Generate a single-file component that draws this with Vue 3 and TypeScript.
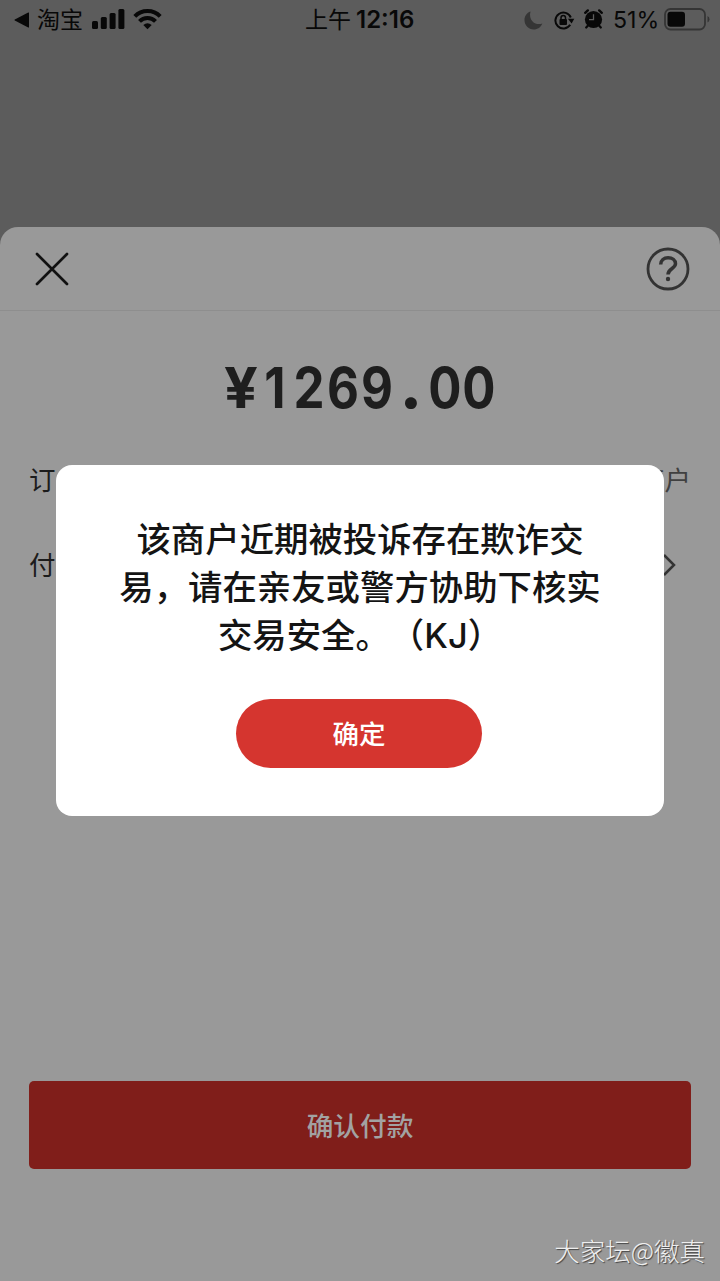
<script setup lang="ts">
const amount: string[] = [...'¥1269.00']
const message: string[] = ['该商户近期被投诉存在欺诈交', '易，请在亲友或警方协助下核实', '交易安全。（KJ）']
const signalBars: number[] = [8, 12, 16, 20]

function digitClass(c: string): string {
  if (c === '.') return 'digit point'
  if (c === '¥') return 'digit yen'
  return 'digit'
}
</script>

<template>
  <div class="screen">
    <header class="status">
      <div class="status-left">
        <svg class="back" width="16" height="16" viewBox="0 0 16 16"><path d="M15 1v14q0 .8-.8.4L.8 8.5q-.8-.5 0-1L14.200.6Q15 .2 15 1z" /></svg>
        <span class="source">淘宝</span>
        <svg class="signal" width="33" height="20" viewBox="0 0 33 20">
          <rect v-for="(h, i) in signalBars" :key="h" :x="i * 8.8" :y="20 - h" width="6" :height="h" rx="1.5" />
        </svg>
        <svg class="wifi" width="29" height="22" viewBox="0 0 29 22">
          <g fill="none" stroke="#080808" stroke-width="4">
            <path d="M1.800 8.300C8.700 1.200 20.300 1.200 27.200 8.300" />
            <path d="M6.500 13.300C10.800 8.800 18.200 8.800 22.500 13.300" />
          </g>
          <path d="M10.300 17Q14.500 13.500 18.700 17L14.500 21.300z" />
        </svg>
      </div>
      <div class="clock"><span class="period">上午</span><span class="time">12:16</span></div>
      <div class="status-right">
        <svg class="moon" width="19" height="19" viewBox="0 0 19 19"><path d="M6.500.5C2.800 1.800.5 5 .5 9c0 5.200 4 9.500 9.200 9.500 4 0 7.300-2.300 8.600-6C14.800 13.800 11 13 8.600 10.500S5.400 4.300 6.500.5z" /></svg>
        <svg class="lock" width="21" height="19" viewBox="0 0 21 19">
          <path d="M16.200 13.800A8 8 0 1 1 16.800 6.500" fill="none" stroke="#080808" stroke-width="2" />
          <path d="M13.900 7.800h6.400l-2.700 4.800z" />
          <rect x="5.500" y="8" width="7.500" height="6" rx="1" />
          <path d="M7 8.500V6.800a2.250 2.250 0 0 1 4.500 0v1.700" fill="none" stroke="#080808" stroke-width="1.500" />
        </svg>
        <svg class="alarm" width="19" height="20" viewBox="0 0 19 20">
          <circle cx="9.500" cy="10.500" r="8.600" />
          <path d="M1.200 3.800L3.800 1.400M17.800 3.800L15.200 1.400" stroke="#080808" stroke-width="2.400" stroke-linecap="round" />
          <path d="M4 16.500l-1.800 2M15 16.500l1.800 2" stroke="#080808" stroke-width="2.200" stroke-linecap="round" />
          <path d="M9.500 5.200v5.500H5" fill="none" stroke="#5c5c5c" stroke-width="1.300" />
        </svg>
        <span class="percent">51%</span>
        <svg class="battery" width="46" height="23" viewBox="0 0 46 23">
          <rect x="1" y="1" width="40" height="20.500" rx="5.500" fill="none" stroke="#353535" stroke-width="1.800" />
          <rect x="3.500" y="3.700" width="17.500" height="15" rx="3" />
          <path d="M43.500 8q2 1 2 3.300t-2 3.300z" fill="#353535" />
        </svg>
      </div>
    </header>

    <main class="sheet">
      <div class="sheet-bar">
        <svg class="close" width="34" height="34" viewBox="0 0 34 34"><path d="M2 2l30 30M32 2L2 32" /></svg>
        <svg class="help" width="44" height="44" viewBox="0 0 44 44">
          <circle cx="22" cy="22" r="20" />
          <path d="M14.700 17.400C14.700 13.200 18 10.700 22.100 10.700S29.500 13.200 29.500 16.800C29.500 21.600 22 21.500 22 27.600" />
          <circle class="dot" cx="22" cy="32" r="2.200" />
        </svg>
      </div>
      <div class="amount">
        <span v-for="(c, i) in amount" :key="i" :class="digitClass(c)">{{ c }}</span>
      </div>
      <div class="row"><span>订</span><span class="value">商户</span></div>
      <div class="row">
        <span>付</span>
        <svg class="chevron" width="14" height="24" viewBox="0 0 14 24"><path d="M2 2l10 10L2 22" /></svg>
      </div>
      <button class="pay">确认付款</button>
    </main>

    <section class="dialog" role="dialog">
      <p class="message"><span v-for="line in message" :key="line">{{ line }}</span></p>
      <button class="confirm">确定</button>
    </section>
    <div class="watermark">大家坛@徽真</div>
  </div>
</template>

<style>
body {
  background: #5c5c5c;
}
</style>

<style scoped>
.screen {
  position: relative;
  width: 720px;
  height: 1281px;
  overflow: hidden;
  display: flex;
  flex-direction: column;
  background: #5c5c5c;
  color: #080808;
  font-family: Inter, "Noto Sans CJK SC", sans-serif;
}
svg {
  display: block;
  flex: none;
  fill: #080808;
}
button {
  display: block;
  border: 0;
  padding: 0 0 2px;
  font-family: "Noto Sans CJK SC", sans-serif;
}
.status {
  height: 227px;
  flex: none;
  display: grid;
  grid-template-columns: 1fr 110px 1fr;
  grid-template-rows: 40px;
  line-height: 40px;
}
.status-left,
.clock,
.status-right {
  display: flex;
  align-items: center;
  white-space: nowrap;
}
.back {
  margin-left: 14px;
}
.source {
  margin-left: 7px;
  padding-bottom: 3px;
  font: 23px/37px "Noto Sans CJK SC", sans-serif;
}
.signal {
  margin-left: 9px;
  margin-top: -2px;
}
.wifi {
  margin-left: 8px;
  margin-top: -2px;
}
.period {
  padding-bottom: 3px;
  font: 23px/37px "Noto Sans CJK SC", sans-serif;
}
.time {
  margin-left: 5px;
  font-size: 24px;
  font-weight: 600;
}
.status-right {
  justify-content: flex-end;
  padding-right: 10px;
}
.moon {
  fill: #353535;
}
.lock {
  margin-left: 11px;
}
.alarm {
  margin-left: 9px;
  margin-top: -2px;
}
.percent {
  margin-left: 10px;
  width: 46px;
  font-size: 23.200px;
}
.battery {
  margin-left: 5px;
  margin-top: -2px;
}
.sheet {
  flex: 1;
  border-radius: 18px 18px 0 0;
  background: #999;
}
.sheet-bar {
  height: 83px;
  display: flex;
  align-items: center;
  justify-content: space-between;
  padding: 0 30px 0 35px;
  border-bottom: 1px solid #8e8e8e;
}
.close {
  fill: none;
  stroke: #111;
  stroke-width: 2.700;
  stroke-linecap: round;
}
.help {
  fill: none;
  stroke: #333;
  stroke-width: 2.800;
}
.help path {
  stroke-width: 3.500;
}
.help .dot {
  fill: #333;
  stroke: none;
}
.amount {
  display: flex;
  justify-content: center;
  height: 126px;
  padding-top: 27px;
  box-sizing: border-box;
  color: #1e1e1e;
  font: 700 56px/100px Inter, sans-serif;
}
.digit {
  display: flex;
  justify-content: center;
  width: 33.900px;
  transform: scaleX(0.880);
}
.yen {
  transform: scaleX(1.060);
}
.point {
  transform: scale(1.250);
  transform-origin: 50% 70%;
}
.row {
  height: 85px;
  display: flex;
  align-items: center;
  justify-content: space-between;
  padding: 0 29px;
  color: #1c1c1c;
  font: 26.500px/40px "Noto Sans CJK SC", sans-serif;
}
.row span {
  padding-bottom: 1px;
}
.value {
  color: #404040;
}
.chevron {
  margin-right: 15px;
  fill: none;
  stroke: #333;
  stroke-width: 2.500;
}
.pay {
  width: 662px;
  height: 88px;
  margin: 474px 29px 0;
  border-radius: 5px;
  background: #801e1a;
  color: #a2a2a2;
  font-size: 26.700px;
  font-weight: 500;
}
.dialog {
  position: absolute;
  left: 56px;
  top: 465px;
  width: 608px;
  height: 351px;
  border-radius: 16px;
  background: #fff;
}
.message {
  margin: 51px 0 0;
  height: 183px;
  color: #141414;
  text-align: center;
  font-size: 34.400px;
  font-weight: 500;
  line-height: 48px;
  text-spacing-trim: space-all;
}
.message span {
  display: block;
  white-space: nowrap;
}
.confirm {
  width: 246px;
  height: 69px;
  margin-left: 180px;
  border-radius: 35px;
  background: #d5352f;
  color: #fff;
  font-size: 26.500px;
  font-weight: 500;
}
.watermark {
  position: absolute;
  right: 15px;
  bottom: 11px;
  color: #eee;
  font: 300 25.500px/40px "Noto Sans CJK SC", sans-serif;
  text-shadow: 1px 1px 1px #444;
}
</style>
